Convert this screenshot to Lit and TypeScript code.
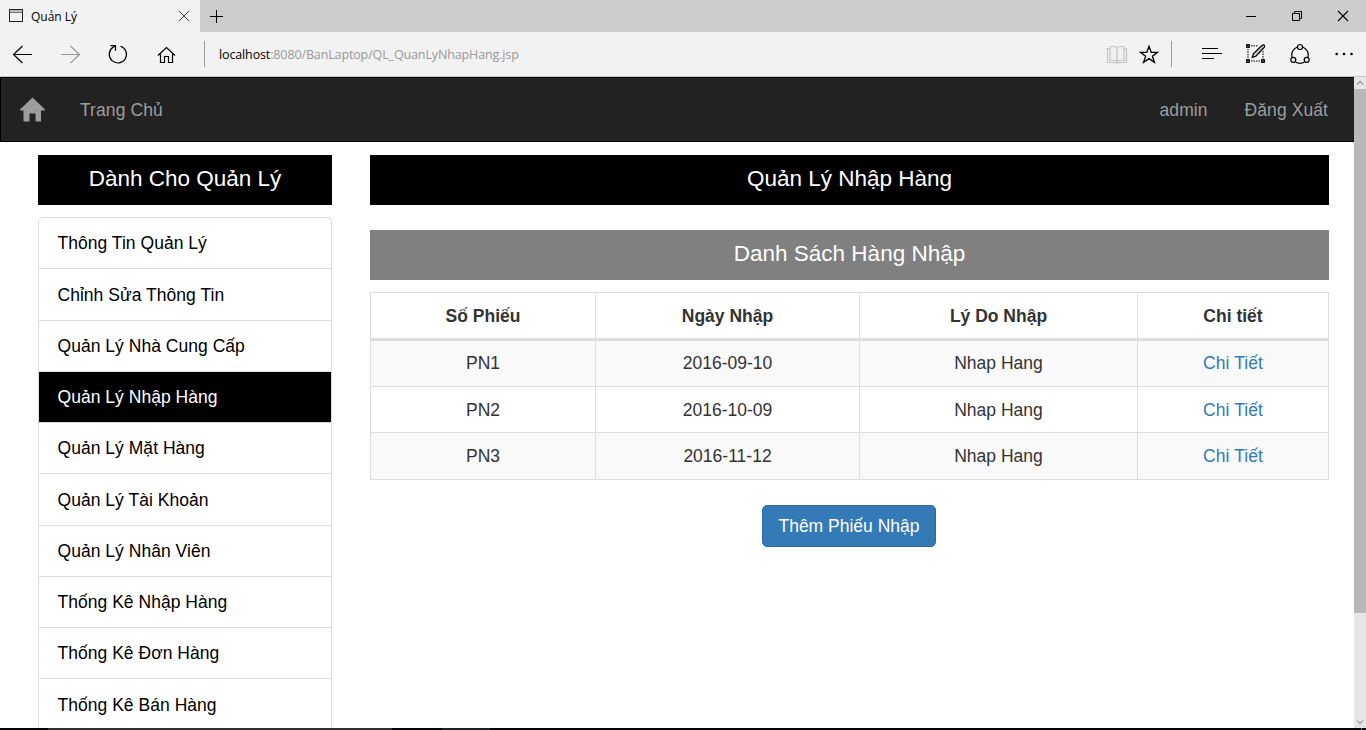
import { LitElement, html, svg, css } from "lit";
import { customElement } from "lit/decorators.js";

type Box = [number, number, number, number];

// Every glyph is plotted in window coordinates; the view box picks its region.
const glyph = (box: Box, body: unknown) => html`<svg
  width=${box[2]}
  height=${box[3]}
  viewBox=${box.join(" ")}
  fill="none"
  stroke="#000"
  stroke-width="1.2"
>${body}</svg>`;

@customElement("browser-chrome")
export class BrowserChrome extends LitElement {
  static styles = css`
    :host { display: block; font-family: "Open Sans", "Noto Sans", sans-serif; color: #000; }
    svg { display: block; flex: none; }
    .tabs { display: flex; height: 32px; background: #ccc; }
    .tab { display: flex; align-items: center; box-sizing: border-box; width: 200px; padding: 0 10px 0 8px; background: #f2f2f2; font-size: 12px; }
    .title { flex: 1; padding-left: 7px; line-height: 34px; height: 32px; }
    .plus { padding: 8px 0 0 8px; }
    .window { display: flex; gap: 30px; margin-left: auto; padding: 8px 15px 0 0; }
    .bar { display: flex; align-items: flex-start; box-sizing: border-box; height: 45px; padding: 10px 12px 0 12px; background: #f2f2f2; border-bottom: 1px solid #c8c8c8; }
    .nav { display: flex; gap: 26px; margin-right: 26px; }
    .rule { width: 1px; height: 26px; margin-top: -1px; background: #999; }
    .url { flex: 1; margin-left: 14px; font-size: 12.5px; line-height: 25px; letter-spacing: -0.13px; color: #999; white-space: nowrap; }
    .host { color: #000; }
    .page-tools { display: flex; gap: 10px; margin-right: 11px; }
    .tools { display: flex; gap: 22px; margin-left: 29px; }
  `;

  render() {
    return html`
      <div class="tabs">
        <div class="tab">
          ${glyph([8, 8, 16, 16], svg`<path d="M9 11h14" stroke="#bbb" stroke-width="3"/><rect x="9.500" y="9.500" width="13" height="12" stroke="#222" stroke-width="1"/><path d="M10 12.500h12" stroke="#777" stroke-width="1"/>`)}
          <span class="title">Quản Lý</span>
          ${glyph([178, 10, 12, 12], svg`<path d="M179 11l10 10M189 11l-10 10" stroke="#333" stroke-width="1"/>`)}
        </div>
        <div class="plus">${glyph([208, 8, 17, 17], svg`<path d="M210 16.500h13M216.500 10v13" stroke-width="1"/>`)}</div>
        <div class="window">
          ${glyph([1245, 8, 16, 16], svg`<path d="M1246 16.500h10" stroke-width="1"/>`)}
          ${glyph([1291, 8, 16, 16], svg`<path d="M1292.500 13.500h7v7h-7zM1294.500 13.500v-2h7v7h-2" stroke-width="1"/>`)}
          ${glyph([1337, 8, 14, 16], svg`<path d="M1338 11l10 10M1348 11l-10 10" stroke-width="1.100"/>`)}
        </div>
      </div>
      <div class="bar">
        <div class="nav">
          ${glyph([12, 42, 22, 24], svg`<path d="M32 54.500H13.500M22.500 46l-9 8.500 9 8.500"/>`)}
          ${glyph([60, 42, 22, 24], svg`<path d="M61 54.500H79.500M70.500 46l9 8.500-9 8.500" stroke="#999"/>`)}
          ${glyph([108, 42, 22, 24], svg`<path d="M120.500 46.200A8.600 8.600 0 1 1 113 47.300L115.500 46M110.500 45.700h5v5"/>`)}
          ${glyph([156, 42, 22, 24], svg`<path d="M158 55.500l8.500-8 8.500 8M160.500 54v8.500h4v-6h4v6h4V54"/>`)}
        </div>
        <div class="rule"></div>
        <div class="url"><span class="host">localhost</span>:8080/BanLaptop/QL_QuanLyNhapHang.jsp</div>
        <div class="page-tools">
          ${glyph([1106, 42, 22, 24], svg`<g stroke="#c4c4c4"><path d="M1110 48.500h-2.500v14h8l1.500 1 1.500-1h8v-14h-2.500"/><path d="M1117 61.500q-1-1-3-1h-4v-14h4q2 0 3 1.500q1-1.500 3-1.500h4v14h-4q-2 0-3 1zM1117 48v13.500"/></g>`)}
          ${glyph([1138, 42, 22, 24], svg`<path d="M1149 46.300l2.200 6h6.300l-5.100 4 2 6-5.400-3.700-5.400 3.700 2-6-5.100-4h6.300z" stroke-width="1.300"/>`)}
        </div>
        <div class="rule"></div>
        <div class="tools">
          ${glyph([1201, 42, 22, 24], svg`<path d="M1202 48.500h16M1202 53.500h20M1202 58.500h12"/>`)}
          ${glyph([1245, 42, 22, 24], svg`<path d="M1251 45.800h7M1248 49v10M1251 61h9M1263 51v8" stroke-width="1" stroke-dasharray="1.500 1"/><g fill="#777"><rect x="1246.700" y="44.700" width="2.600" height="2.600"/><rect x="1246.700" y="59.700" width="2.600" height="2.600"/><rect x="1261.700" y="59.700" width="2.600" height="2.600"/></g><path d="M1252.300 57.300l1.200-3.800 8.700-8.200q1.600-.9 2.300.3.400 1-.4 1.900l-8.300 8.700z" fill="#ccc"/>`)}
          ${glyph([1289, 42, 22, 24], svg`<circle cx="1300" cy="55" r="8.300"/><g fill="#f2f2f2"><circle cx="1300" cy="47" r="2.500"/><circle cx="1293.300" cy="59.800" r="2.500"/><circle cx="1306.700" cy="59.800" r="2.500"/></g>`)}
          ${glyph([1333, 42, 21, 24], svg`<g fill="#000" stroke="none"><circle cx="1336.700" cy="54" r="1.300"/><circle cx="1344" cy="54" r="1.300"/><circle cx="1351.500" cy="54" r="1.300"/></g>`)}
        </div>
      </div>
    `;
  }
}

@customElement("side-menu")
export class SideMenu extends LitElement {
  static styles = css`
    :host { display: block; }
    .list { box-sizing: border-box; border: 1px solid #ddd; border-bottom: 0; border-radius: 5px 5px 0 0; }
    .item { box-sizing: border-box; height: 51.25px; padding: 0.3px 0 0 18.5px; line-height: 51px; letter-spacing: 0.03px; color: #000; border-bottom: 1px solid #ddd; white-space: nowrap; }
    .active { background: #000; background-clip: padding-box; color: #fff; }
  `;

  private items = [
    "Thông Tin Quản Lý", "Chỉnh Sửa Thông Tin", "Quản Lý Nhà Cung Cấp", "Quản Lý Nhập Hàng",
    "Quản Lý Mặt Hàng", "Quản Lý Tài Khoản", "Quản Lý Nhân Viên", "Thống Kê Nhập Hàng",
    "Thống Kê Đơn Hàng", "Thống Kê Bán Hàng",
  ];

  render() {
    return html`<div class="list">
      ${this.items.map((t, i) => html`<div class="item ${i === 3 ? "active" : ""}">${t}</div>`)}
    </div>`;
  }
}

@customElement("receipt-table")
export class ReceiptTable extends LitElement {
  static styles = css`
    :host { display: block; }
    table { table-layout: fixed; width: 959px; border-collapse: separate; border-spacing: 0; border-left: 1px solid #ddd; border-top: 1px solid #ddd; color: #333; text-align: center; }
    th, td { box-sizing: border-box; height: 46px; padding: 0; border-right: 1px solid #ddd; border-bottom: 1px solid #ddd; line-height: 25px; }
    th { height: 48px; padding-top: 2px; border-bottom-width: 3px; }
    .c1 { width: 225px; }
    .c2 { width: 264px; }
    .c3 { width: 278px; }
    tbody tr:nth-child(odd) { background: #f9f9f9; }
    tbody tr:nth-child(2) td { padding-top: 2px; }
    tbody tr:last-child td { height: 47px; }
    tbody td.link { letter-spacing: 0.08px; color: #337ab7; }
  `;

  private rows = [["PN1", "2016-09-10"], ["PN2", "2016-10-09"], ["PN3", "2016-11-12"]];

  render() {
    return html`<table>
      <thead><tr><th class="c1">Số Phiếu</th><th class="c2">Ngày Nhập</th><th class="c3">Lý Do Nhập</th><th>Chi tiết</th></tr></thead>
      <tbody>
        ${this.rows.map(([id, date]) => html`<tr><td>${id}</td><td>${date}</td><td>Nhap Hang</td><td class="link">Chi Tiết</td></tr>`)}
      </tbody>
    </table>`;
  }
}

@customElement("app-root")
export class AppRoot extends LitElement {
  static styles = css`
    :host { display: flex; flex-direction: column; width: 1366px; height: 730px; overflow: hidden; background: #fff; font: 17.5px "Liberation Sans", Arial, sans-serif; }
    svg { display: block; }
    .view { display: flex; height: 651px; overflow: hidden; }
    .page { width: 1354px; overflow: hidden; }
    .navbar { display: flex; align-items: center; box-sizing: border-box; height: 65px; padding: 0 26px 0 19px; background: #222; border: 1px solid #000; border-right: 0; color: #9d9d9d; line-height: 22px; letter-spacing: 0.08px; }
    .home { margin-right: 35px; }
    .user { margin: 0 37px 0 auto; }
    .columns { display: flex; gap: 38px; padding: 13px 25px 0 38px; }
    .side { width: 294px; }
    .main { width: 959px; }
    .heading { height: 50px; line-height: 47px; font-size: 22.5px; text-align: center; background: #000; color: #fff; }
    .sub { margin-top: 25px; background: #808080; }
    side-menu, receipt-table { margin-top: 12px; }
    .actions { display: flex; justify-content: center; margin-top: 25px; padding-right: 1px; }
    .button { box-sizing: border-box; width: 174px; height: 42px; line-height: 40px; text-align: center; color: #fff; background: #337ab7; border: 1px solid #2e6da4; border-radius: 5px; }
    .scroll { display: flex; flex-direction: column; width: 12px; background: #e6e6e6; }
    .thumb { flex: 1; margin-bottom: 103px; background: #b8b8b8; }
    .taskbar { display: flex; height: 2px; background: #02050c; }
    .segment { width: 344px; margin-left: 48px; background: #303134; }
    .segment.short { width: 48px; margin-left: 50px; background: #1b2027; }
    .segment.edge { width: 1px; margin: 0 4px 0 auto; background: #777; }
  `;

  render() {
    return html`
      <browser-chrome></browser-chrome>
      <div class="view">
        <div class="page">
          <div class="navbar">
            <svg class="home" width="25" height="25" viewBox="0 0 25 25" fill="#9d9d9d"><path d="M12.500.500L25 12.500V13.500H21V24.500H15.500V16.500H9.500V24.500H3.500V13.500H0V12.500z"/></svg>
            <span>Trang Chủ</span>
            <span class="user">admin</span>
            <span>Đăng Xuất</span>
          </div>
          <div class="columns">
            <div class="side">
              <div class="heading">Dành Cho Quản Lý</div>
              <side-menu></side-menu>
            </div>
            <div class="main">
              <div class="heading">Quản Lý Nhập Hàng</div>
              <div class="heading sub">Danh Sách Hàng Nhập</div>
              <receipt-table></receipt-table>
              <div class="actions"><div class="button">Thêm Phiếu Nhập</div></div>
            </div>
          </div>
        </div>
        <div class="scroll">
          <svg width="12" height="12" viewBox="0 0 12 12" fill="none" stroke="#999" stroke-width="1.300"><path d="M3 7.500l3-3 3 3"/></svg>
          <div class="thumb"></div>
          <svg width="12" height="12" viewBox="0 0 12 12" fill="none" stroke="#aaa" stroke-width="1.300"><path d="M3 4.500l3 3 3-3"/></svg>
        </div>
      </div>
      <div class="taskbar"><div class="segment"></div><div class="segment short"></div><div class="segment edge"></div></div>
    `;
  }
}
